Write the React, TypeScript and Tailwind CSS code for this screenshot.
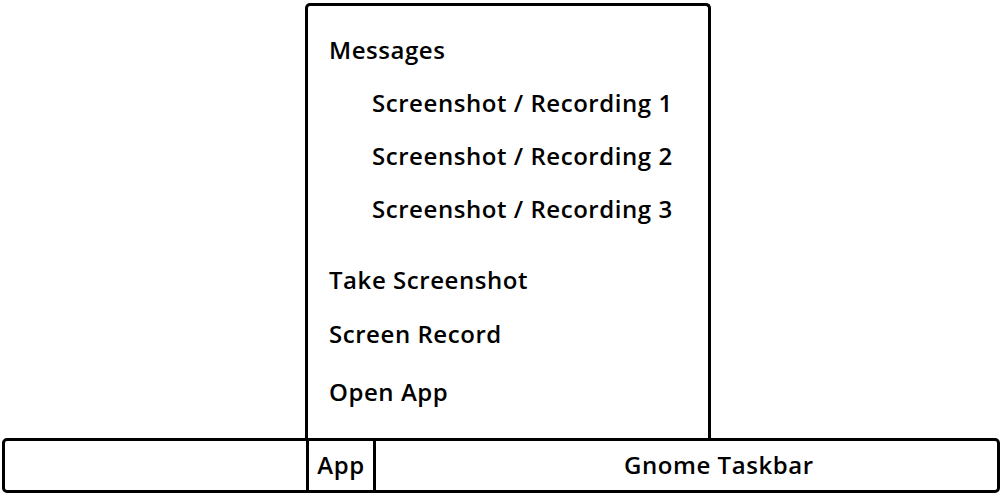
export default function App() {
  const font = { fontFamily: '"Open Sans", "Liberation Sans", sans-serif' };
  return (
    <div className="w-[1002px] h-[496px] bg-white flex flex-col text-black" style={font}>
      <div className="ml-[305px] mt-[3px] w-[406px] h-[438px] border-[3px] border-b-0 border-black rounded-t-[5px] flex flex-col pl-[21px] pt-[17px] text-[24px] font-semibold tracking-[0.55px] leading-none">
        <div className="h-[53px] flex items-center">Messages</div>
        <div className="h-[53px] flex items-center pl-[43px]">Screenshot / Recording 1</div>
        <div className="h-[53px] flex items-center pl-[43px]">Screenshot / Recording 2</div>
        <div className="h-[53px] flex items-center pl-[43px]">Screenshot / Recording 3</div>
        <div className="h-[53px] mt-[18px] flex items-center">Take Screenshot</div>
        <div className="h-[53px] mt-[1px] flex items-center">Screen Record</div>
        <div className="h-[53px] mt-[5px] flex items-center">Open App</div>
      </div>
      <div className="-mt-[3px] ml-[2px] w-[998px] h-[55px] border-[3px] border-black rounded-[5px] flex text-[24px] font-semibold tracking-[0.55px] leading-none">
        <div className="w-[301px] h-full" />
        <div className="w-[70px] h-full border-x-[3px] border-black flex items-center justify-center pb-[1px]">App</div>
        <div className="flex-1 h-full flex items-center pl-[248px] pb-[1px]">Gnome Taskbar</div>
      </div>
    </div>
  );
}
